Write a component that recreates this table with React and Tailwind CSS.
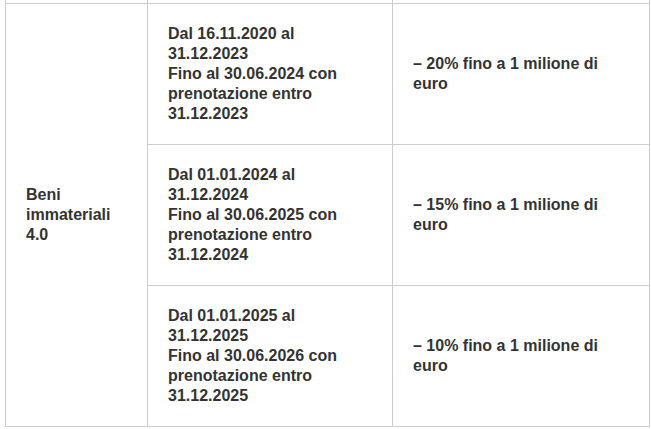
const rows = [
  {
    period: ["Dal 16.11.2020 al", "31.12.2023", "Fino al 30.06.2024 con", "prenotazione entro", "31.12.2023"],
    rate: ["– 20% fino a 1 milione di", "euro"],
  },
  {
    period: ["Dal 01.01.2024 al", "31.12.2024", "Fino al 30.06.2025 con", "prenotazione entro", "31.12.2024"],
    rate: ["– 15% fino a 1 milione di", "euro"],
  },
  {
    period: ["Dal 01.01.2025 al", "31.12.2025", "Fino al 30.06.2026 con", "prenotazione entro", "31.12.2025"],
    rate: ["– 10% fino a 1 milione di", "euro"],
  },
];

const cell = "border border-[#cccccc] px-5 py-5 align-middle";

export default function App() {
  return (
    <div className="h-[429px] w-[651px] overflow-hidden bg-white font-['Liberation_Sans',Arial,sans-serif] text-[16px] font-bold leading-5 text-[#333333]">
      <table className="ml-[5px] w-[644px] table-fixed border-collapse">
        <colgroup>
          <col className="w-[142px]" />
          <col className="w-[245px]" />
          <col className="w-[257px]" />
        </colgroup>
        <tbody>
          {/* tail of the row above, cut off by the viewport */}
          <tr className="h-[3px]">
            <td className="border-x border-[#cccccc] p-0" />
            <td className="border-x border-[#cccccc] p-0" />
            <td className="border-x border-[#cccccc] p-0" />
          </tr>
          {rows.map((r, i) => (
            <tr key={i}>
              {i === 0 && (
                <td rowSpan={3} className={cell}>
                  <div>Beni</div>
                  <div>immateriali</div>
                  <div>4.0</div>
                </td>
              )}
              <td className={cell}>
                {r.period.map((l) => (
                  <div key={l} className="whitespace-nowrap">{l}</div>
                ))}
              </td>
              <td className={cell}>
                {r.rate.map((l) => (
                  <div key={l} className="whitespace-nowrap">{l}</div>
                ))}
              </td>
            </tr>
          ))}
        </tbody>
      </table>
    </div>
  );
}
